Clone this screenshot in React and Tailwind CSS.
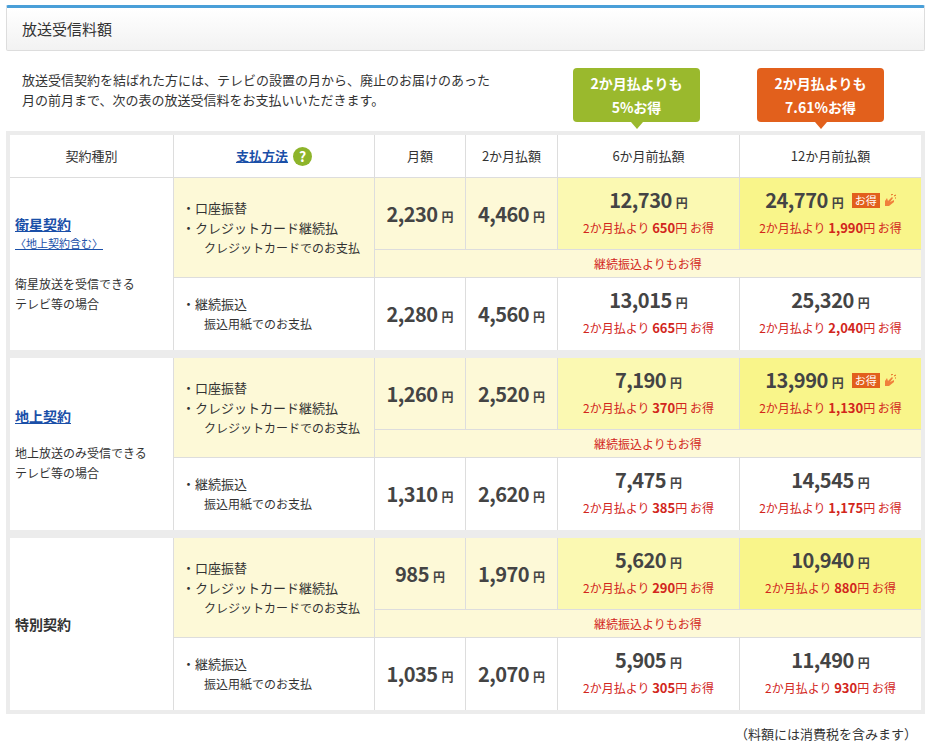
const F = { fontFamily: '"Noto Sans CJK JP","Noto Sans",sans-serif' };

function Price({ v, save, badge }) {
  return (
    <div className="flex flex-col items-center justify-center h-full">
      <div className="flex items-baseline">
        <span className="text-[20px] font-bold text-[#444] leading-none tracking-tight">{v}</span>
        <span className="text-[12px] font-bold text-[#444] ml-1">円</span>
        {badge && (
          <span className="ml-2 flex items-center self-center">
            <span className="bg-[#e2601c] text-white text-[11px] px-[3px] leading-[15px]">お得</span>
            <svg width="14" height="14" viewBox="0 0 14 14" className="ml-[2px]">
              <path d="M3 12 L3 7 L5 4 L6 7 L10 3 L11 4 L8 8 L12 6 L12 8 L7 12 Z" fill="#f0803c" />
              <path d="M9 1 L11 0 M12 2 L14 1 M13 4 L14 4" stroke="#e2601c" strokeWidth="1" />
            </svg>
          </span>
        )}
      </div>
      <div className="text-[12px] text-[#d2261c] mt-[6px]">
        2か月払より <span className="font-bold text-[13px]">{save}</span>円 お得
      </div>
    </div>
  );
}

function Big({ v }) {
  return (
    <div className="flex items-baseline justify-center h-full items-center">
      <span className="text-[20px] font-bold text-[#444] tracking-tight">{v}</span>
      <span className="text-[12px] font-bold text-[#444] ml-1 mt-[6px]">円</span>
    </div>
  );
}

function Group({ type, a, b }) {
  const c = "border-[#ddd]";
  return (
    <div className="grid bg-white" style={{ gridTemplateColumns: "164px 201px 91px 92px 182px 181px", gridTemplateRows: "72px 28px 72px" }}>
      <div className={`row-span-3 border-r ${c} px-[5px] flex flex-col justify-center`}>{type}</div>
      <div className={`row-span-2 border-r border-b ${c} bg-[#fdf9d7] flex flex-col justify-center pl-[8px] text-[13px] text-[#333] leading-[20px]`}>
        <div>・口座振替</div>
        <div>・クレジットカード継続払</div>
        <div className="pl-[22px] text-[12px]">クレジットカードでのお支払</div>
      </div>
      <div className={`border-r border-b ${c} bg-[#fdf9d7]`}><Big v={a[0]} /></div>
      <div className={`border-r border-b ${c} bg-[#fdf9d7]`}><Big v={a[1]} /></div>
      <div className={`border-r border-b ${c} bg-[#fbf9b2]`}><Price v={a[2]} save={a[3]} /></div>
      <div className={`border-b ${c} bg-[#f9f58a]`}><Price v={a[4]} save={a[5]} badge={a[6]} /></div>
      <div className={`col-span-4 border-b ${c} bg-[#fdf9d7] flex items-center justify-center text-[12px] text-[#d2261c]`}>継続振込よりもお得</div>
      <div className={`border-r ${c} flex flex-col justify-center pl-[8px] text-[13px] text-[#333] leading-[20px]`}>
        <div>・継続振込</div>
        <div className="pl-[22px] text-[12px]">振込用紙でのお支払</div>
      </div>
      <div className={`border-r ${c}`}><Big v={b[0]} /></div>
      <div className={`border-r ${c}`}><Big v={b[1]} /></div>
      <div className={`border-r ${c}`}><Price v={b[2]} save={b[3]} /></div>
      <div><Price v={b[4]} save={b[5]} /></div>
    </div>
  );
}

function Badge({ color, l1, l2 }) {
  return (
    <div className="relative">
      <div className="rounded-[4px] text-white font-bold text-[14px] leading-[24px] text-center w-[127px] py-[3px]" style={{ background: color }}>
        <div>{l1}</div><div>{l2}</div>
      </div>
      <div className="absolute left-1/2 -translate-x-1/2 w-0 h-0 border-l-[6px] border-r-[6px] border-t-[7px] border-l-transparent border-r-transparent" style={{ borderTopColor: color }} />
    </div>
  );
}

export default function App() {
  const hc = "border-r border-[#ddd] flex items-center justify-center text-[13px] text-[#333]";
  return (
    <div style={F} className="w-[931px] h-[749px] bg-white text-[#333] px-[6px] pt-[5px]">
      <div className="h-[46px] border border-[#ddd] border-t-[3px] border-t-[#4a9fd8] rounded-[2px] bg-gradient-to-b from-white to-[#f2f2f2] flex items-center pl-[15px] text-[15px] text-[#333]">放送受信料額</div>
      <div className="flex mt-[17px] h-[63px]">
        <div className="pl-[16px] pt-[2px] text-[13px] leading-[20px] w-[560px]">
          放送受信契約を結ばれた方には、テレビの設置の月から、廃止のお届けのあった<br />月の前月まで、次の表の放送受信料をお支払いいただきます。
        </div>
        <div className="ml-[7px]"><Badge color="#9ab92d" l1="2か月払よりも" l2="5%お得" /></div>
        <div className="ml-[57px]"><Badge color="#e2601c" l1="2か月払よりも" l2="7.61%お得" /></div>
      </div>
      <div className="bg-[#ececec] p-[4px] flex flex-col gap-[8px]">
        <div>
          <div className="grid bg-white border-b border-[#ddd] h-[43px]" style={{ gridTemplateColumns: "164px 201px 91px 92px 182px 181px" }}>
            <div className={hc}>契約種別</div>
            <div className={hc}>
              <span className="text-[#1a4fa8] underline font-bold">支払方法</span>
              <span className="ml-[5px] w-[19px] h-[19px] rounded-full bg-[#8db42b] text-white font-bold text-[14px] flex items-center justify-center">?</span>
            </div>
            <div className={hc}>月額</div>
            <div className={hc}>2か月払額</div>
            <div className={hc}>6か月前払額</div>
            <div className="flex items-center justify-center text-[13px]">12か月前払額</div>
          </div>
          <Group
            type={<><div className="text-[14px] font-bold text-[#1a4fa8] underline">衛星契約</div><div className="text-[11px] text-[#1a4fa8] underline">〈地上契約含む〉</div><div className="text-[12px] leading-[20px] mt-[22px]">衛星放送を受信できる<br />テレビ等の場合</div></>}
            a={["2,230", "4,460", "12,730", "650", "24,770", "1,990", true]}
            b={["2,280", "4,560", "13,015", "665", "25,320", "2,040"]}
          />
        </div>
        <Group
          type={<><div className="text-[14px] font-bold text-[#1a4fa8] underline">地上契約</div><div className="text-[12px] leading-[20px] mt-[16px]">地上放送のみ受信できる<br />テレビ等の場合</div></>}
          a={["1,260", "2,520", "7,190", "370", "13,990", "1,130", true]}
          b={["1,310", "2,620", "7,475", "385", "14,545", "1,175"]}
        />
        <Group
          type={<div className="text-[14px] font-bold">特別契約</div>}
          a={["985", "1,970", "5,620", "290", "10,940", "880"]}
          b={["1,035", "2,070", "5,905", "305", "11,490", "930"]}
        />
      </div>
      <div className="text-right text-[13px] mt-[10px] pr-[8px]">（料額には消費税を含みます）</div>
    </div>
  );
}
